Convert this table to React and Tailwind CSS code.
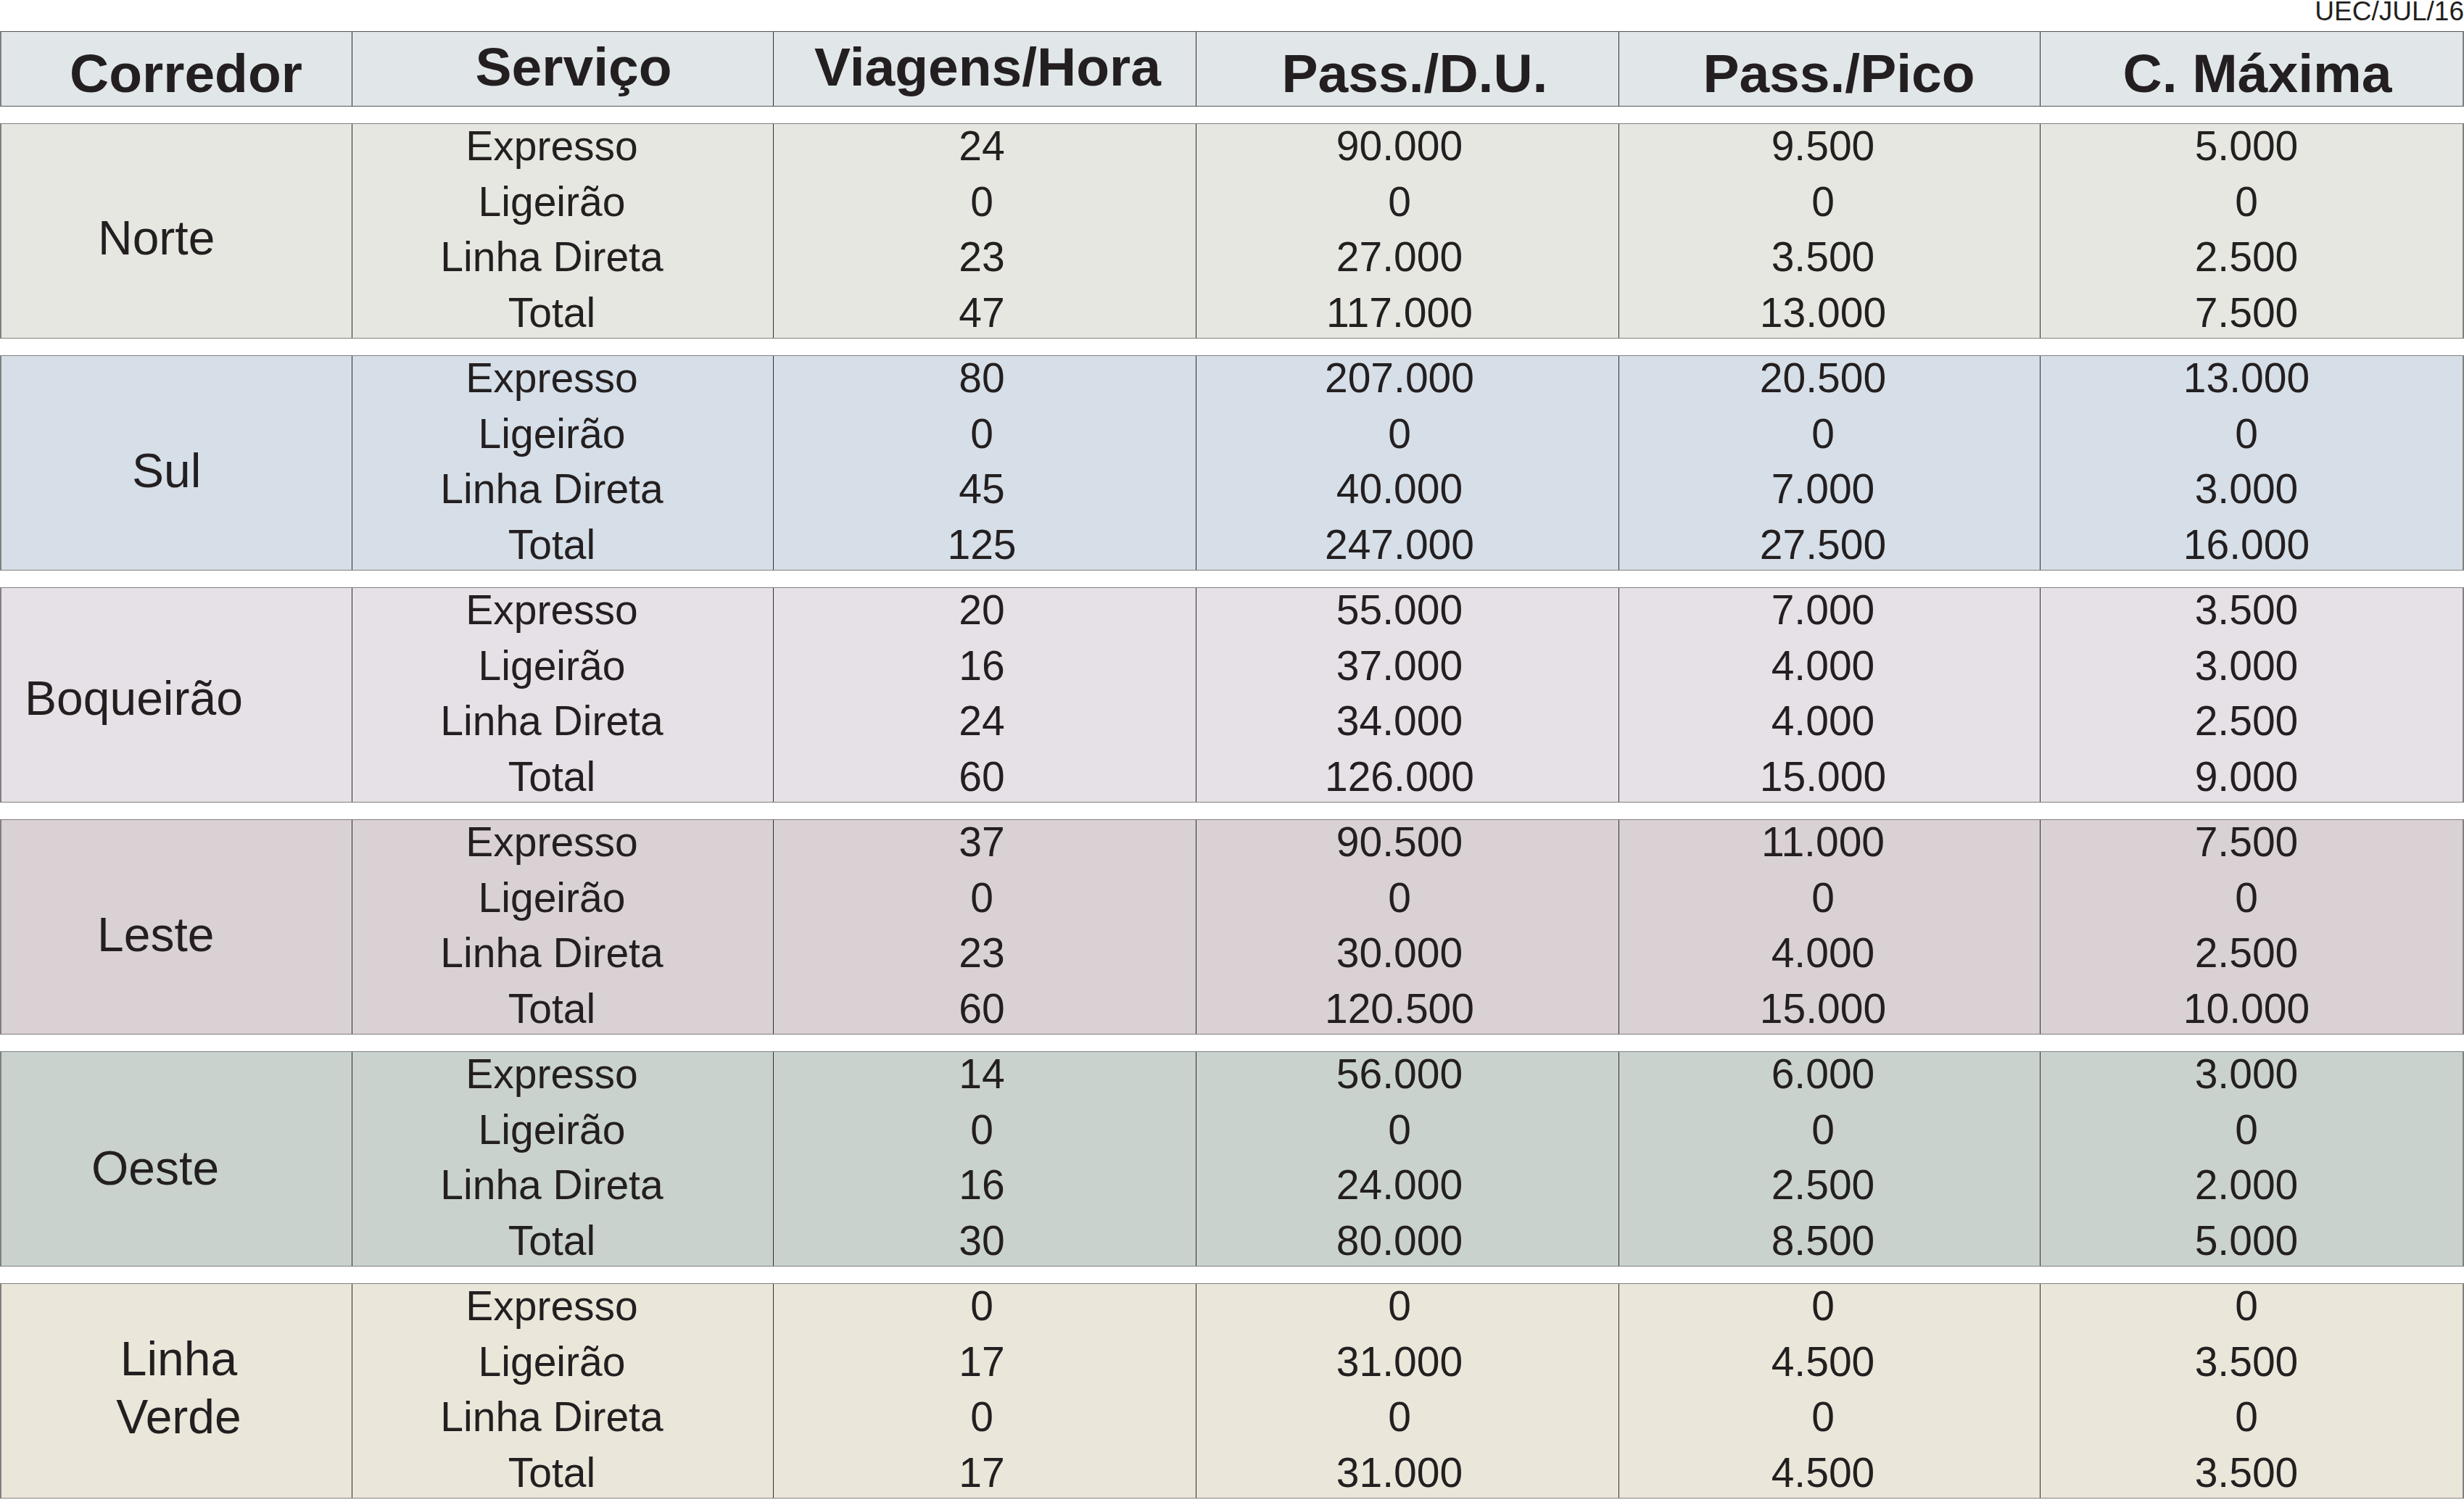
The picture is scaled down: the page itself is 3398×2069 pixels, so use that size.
import React from 'react';

const groups = [
  {
    name: ['Norte'],
    bg: 'bg-[#e6e7e0]',
    nameClass: 'justify-start pl-[133px] pt-[18px]',
    rows: [
      ['24', '90.000', '9.500', '5.000'],
      ['0', '0', '0', '0'],
      ['23', '27.000', '3.500', '2.500'],
      ['47', '117.000', '13.000', '7.500'],
    ],
  },
  {
    name: ['Sul'],
    bg: 'bg-[#d6dee7]',
    nameClass: 'justify-start pl-[180px] pt-[20px]',
    rows: [
      ['80', '207.000', '20.500', '13.000'],
      ['0', '0', '0', '0'],
      ['45', '40.000', '7.000', '3.000'],
      ['125', '247.000', '27.500', '16.000'],
    ],
  },
  {
    name: ['Boqueirão'],
    bg: 'bg-[#e6e1e6]',
    nameClass: 'justify-start pl-[32px] pt-[8px]',
    rows: [
      ['20', '55.000', '7.000', '3.500'],
      ['16', '37.000', '4.000', '3.000'],
      ['24', '34.000', '4.000', '2.500'],
      ['60', '126.000', '15.000', '9.000'],
    ],
  },
  {
    name: ['Leste'],
    bg: 'bg-[#d9d1d4]',
    nameClass: 'justify-start pl-[132px] pt-[20px]',
    rows: [
      ['37', '90.500', '11.000', '7.500'],
      ['0', '0', '0', '0'],
      ['23', '30.000', '4.000', '2.500'],
      ['60', '120.500', '15.000', '10.000'],
    ],
  },
  {
    name: ['Oeste'],
    bg: 'bg-[#cad2cd]',
    nameClass: 'justify-start pl-[124px] pt-[24px]',
    rows: [
      ['14', '56.000', '6.000', '3.000'],
      ['0', '0', '0', '0'],
      ['16', '24.000', '2.500', '2.000'],
      ['30', '80.000', '8.500', '5.000'],
    ],
  },
  {
    name: ['Linha', 'Verde'],
    bg: 'bg-[#ebe6da]',
    nameClass: 'justify-center pl-[6px] pb-[9px]',
    rows: [
      ['0', '0', '0', '0'],
      ['17', '31.000', '4.500', '3.500'],
      ['0', '0', '0', '0'],
      ['17', '31.000', '4.500', '3.500'],
    ],
  },
];

const services = ['Expresso', 'Ligeirão', 'Linha Direta', 'Total'];

// small nudges so the numbers sit where the printed table has them
const numberPads = ['pr-[8px]', 'pr-[22px]', 'pr-[18px]', 'pr-[14px]'];

const headers = [
  { label: 'Corredor', cls: 'pt-[12px] pl-[26px]' },
  { label: 'Serviço', cls: 'pb-[6px] pl-[30px]' },
  { label: 'Viagens/Hora', cls: 'pb-[6px] pl-[8px]' },
  { label: 'Pass./D.U.', cls: 'pt-[12px] pl-[20px]' },
  { label: 'Pass./Pico', cls: 'pt-[12px] pl-[26px]' },
  { label: 'C. Máxima', cls: 'pt-[12px] pl-[16px]' },
];

const gridCols = 'grid grid-cols-[483px_581px_583px_583px_581px_583px]';
const boxBorder = 'border-x-2 border-y border-[#808080]';

const Column = ({ items, className = '' }) => (
  <div className={`flex flex-col justify-between items-center pt-[2px] pb-[6px] leading-[57px] border-l border-[#2e2e2e] ${className}`}>
    {items.map((t, i) => (
      <span key={i}>{t}</span>
    ))}
  </div>
);

const Group = ({ group }) => (
  <div className={`${gridCols} ${boxBorder} ${group.bg} h-[297px] mb-[23px]`}>
    <div className={`flex items-center text-[66px] leading-[80px] ${group.nameClass}`}>
      <div className="flex flex-col items-center">
        {group.name.map((n) => (
          <span key={n}>{n}</span>
        ))}
      </div>
    </div>
    <Column items={services} className="pr-[30px]" />
    {[0, 1, 2, 3].map((c) => (
      <Column key={c} items={group.rows.map((r) => r[c])} className={numberPads[c]} />
    ))}
  </div>
);

export default function App() {
  return (
    <div
      className="w-[3398px] h-[2069px] overflow-hidden bg-white text-[#231f20] text-[57px]"
      style={{ fontFamily: '"Liberation Sans", Arial, sans-serif' }}
    >
      <div className="h-[43px] flex justify-end text-[37px] leading-[31px]">
        UEC/JUL/16
      </div>
      <div className={`${gridCols} ${boxBorder} border-y-[#555555] bg-[#e1e6e9] h-[104px] mb-[23px]`}>
        {headers.map((h, i) => (
          <div
            key={h.label}
            className={`flex items-center justify-center font-bold text-[75px] leading-none ${i > 0 ? 'border-l border-[#2e2e2e]' : ''} ${h.cls}`}
          >
            {h.label}
          </div>
        ))}
      </div>
      {groups.map((g) => (
        <Group key={g.name.join(' ')} group={g} />
      ))}
    </div>
  );
}
